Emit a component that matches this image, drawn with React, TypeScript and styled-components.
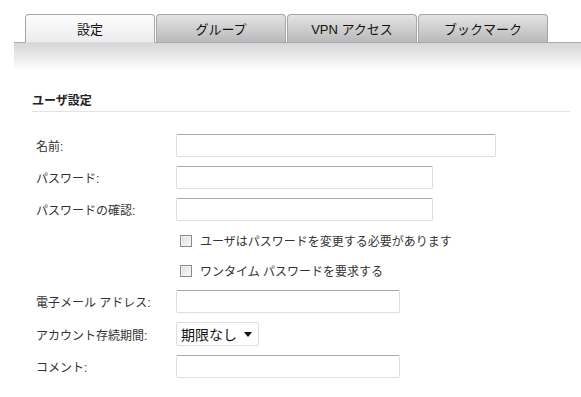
import React, { useState } from "react";
import styled, { createGlobalStyle } from "styled-components";

const GlobalStyle = createGlobalStyle`
  body {
    margin: 0;
    background: #fff;
    font-family: "Liberation Sans", "Noto Sans CJK JP", sans-serif;
    color: #333;
  }
`;

const TABS = ["設定", "グループ", "VPN アクセス", "ブックマーク"];

const App = () => {
  const [active, setActive] = useState(0);

  return (
    <>
      <GlobalStyle />
      <Page>
        <TabBar>
          {TABS.map((t, i) => (
            <Tab key={t} isActive={i === active} onClick={() => setActive(i)}>
              {t}
            </Tab>
          ))}
        </TabBar>
        <Band />
        <Section>
          <SectionTitle>ユーザ設定</SectionTitle>
          <Form>
            <Label>名前:</Label>
            <Input width={320} />
            <Label>パスワード:</Label>
            <Input type="password" width={257} />
            <Label>パスワードの確認:</Label>
            <Input type="password" width={257} />
            <CheckRow>
              <Check type="checkbox" />
              ユーザはパスワードを変更する必要があります
            </CheckRow>
            <CheckRow>
              <Check type="checkbox" />
              ワンタイム パスワードを要求する
            </CheckRow>
            <Label>電子メール アドレス:</Label>
            <Input width={224} />
            <Label>アカウント存続期間:</Label>
            <SelectBox>
              期限なし
              <Caret />
            </SelectBox>
            <Label>コメント:</Label>
            <Input width={224} />
          </Form>
        </Section>
      </Page>
    </>
  );
};

export default App;

const Page = styled.div`
  width: 581px;
  height: 397px;
  overflow: hidden;
  padding-top: 14px;
  box-sizing: border-box;
`;

const TabBar = styled.div`
  display: flex;
  gap: 1px;
  margin-left: 14px;
  padding-left: 11px;
  border-bottom: 1px solid #a9a9bb;
  height: 28px;
`;

const Tab = styled.div<{ isActive: boolean }>`
  width: 130px;
  height: 28px;
  box-sizing: border-box;
  border: 1px solid #a6a6a6;
  border-radius: 4px 4px 0 0;
  display: flex;
  align-items: center;
  justify-content: center;
  font-size: 13px;
  color: #111;
  cursor: pointer;
  ${({ isActive }) =>
    isActive
      ? `
    background: linear-gradient(#fdfdfd, #ececec);
    border-bottom: 1px solid #dcdce8;
    margin-bottom: -1px;
    height: 29px;
  `
      : `
    background: linear-gradient(#e4e4e4, #b9b9b9);
    border-bottom: none;
  `}
`;

const Band = styled.div`
  margin-left: 14px;
  height: 28px;
  background: linear-gradient(#d6d6d6, #ffffff);
`;

const Section = styled.div`
  padding: 22px 11px 0 32px;
`;

const SectionTitle = styled.div`
  font-size: 12px;
  line-height: 16px;
  font-weight: bold;
  color: #222;
  padding-bottom: 2px;
  border-bottom: 1px solid #e2e2e2;
`;

const Form = styled.div`
  display: grid;
  grid-template-columns: 144px 1fr;
  align-items: center;
  row-gap: 9px;
  padding-top: 22px;
`;

const Label = styled.div`
  font-size: 12px;
  color: #333;
  padding-left: 4px;
`;

const Input = styled.input<{ width: number }>`
  width: ${({ width }) => width}px;
  height: 23px;
  box-sizing: border-box;
  border: 1px solid #dcdce4;
  border-top-color: #a8a8a8;
  border-radius: 2px;
  outline: none;
  padding: 2px 4px;
  font-size: 12px;
`;

const CheckRow = styled.label`
  grid-column: 2;
  display: flex;
  align-items: center;
  gap: 8px;
  font-size: 12px;
  color: #333;
  height: 21px;
  padding-left: 4px;
`;

const Check = styled.input`
  appearance: none;
  margin: 0;
  width: 12px;
  height: 12px;
  border: 1px solid #8a8a8a;
  background: linear-gradient(135deg, #dcdcdc, #fafafa);
  box-shadow: inset 0 0 0 1px #f2f2f2;
`;

const SelectBox = styled.div`
  width: 83px;
  height: 24px;
  box-sizing: border-box;
  border: 1px solid #dcdce4;
  border-radius: 2px;
  display: flex;
  align-items: center;
  justify-content: space-between;
  padding: 0 6px 0 4px;
  font-size: 14px;
  color: #111;
`;

const Caret = styled.span`
  width: 0;
  height: 0;
  border-left: 4px solid transparent;
  border-right: 4px solid transparent;
  border-top: 5px solid #111;
`;
